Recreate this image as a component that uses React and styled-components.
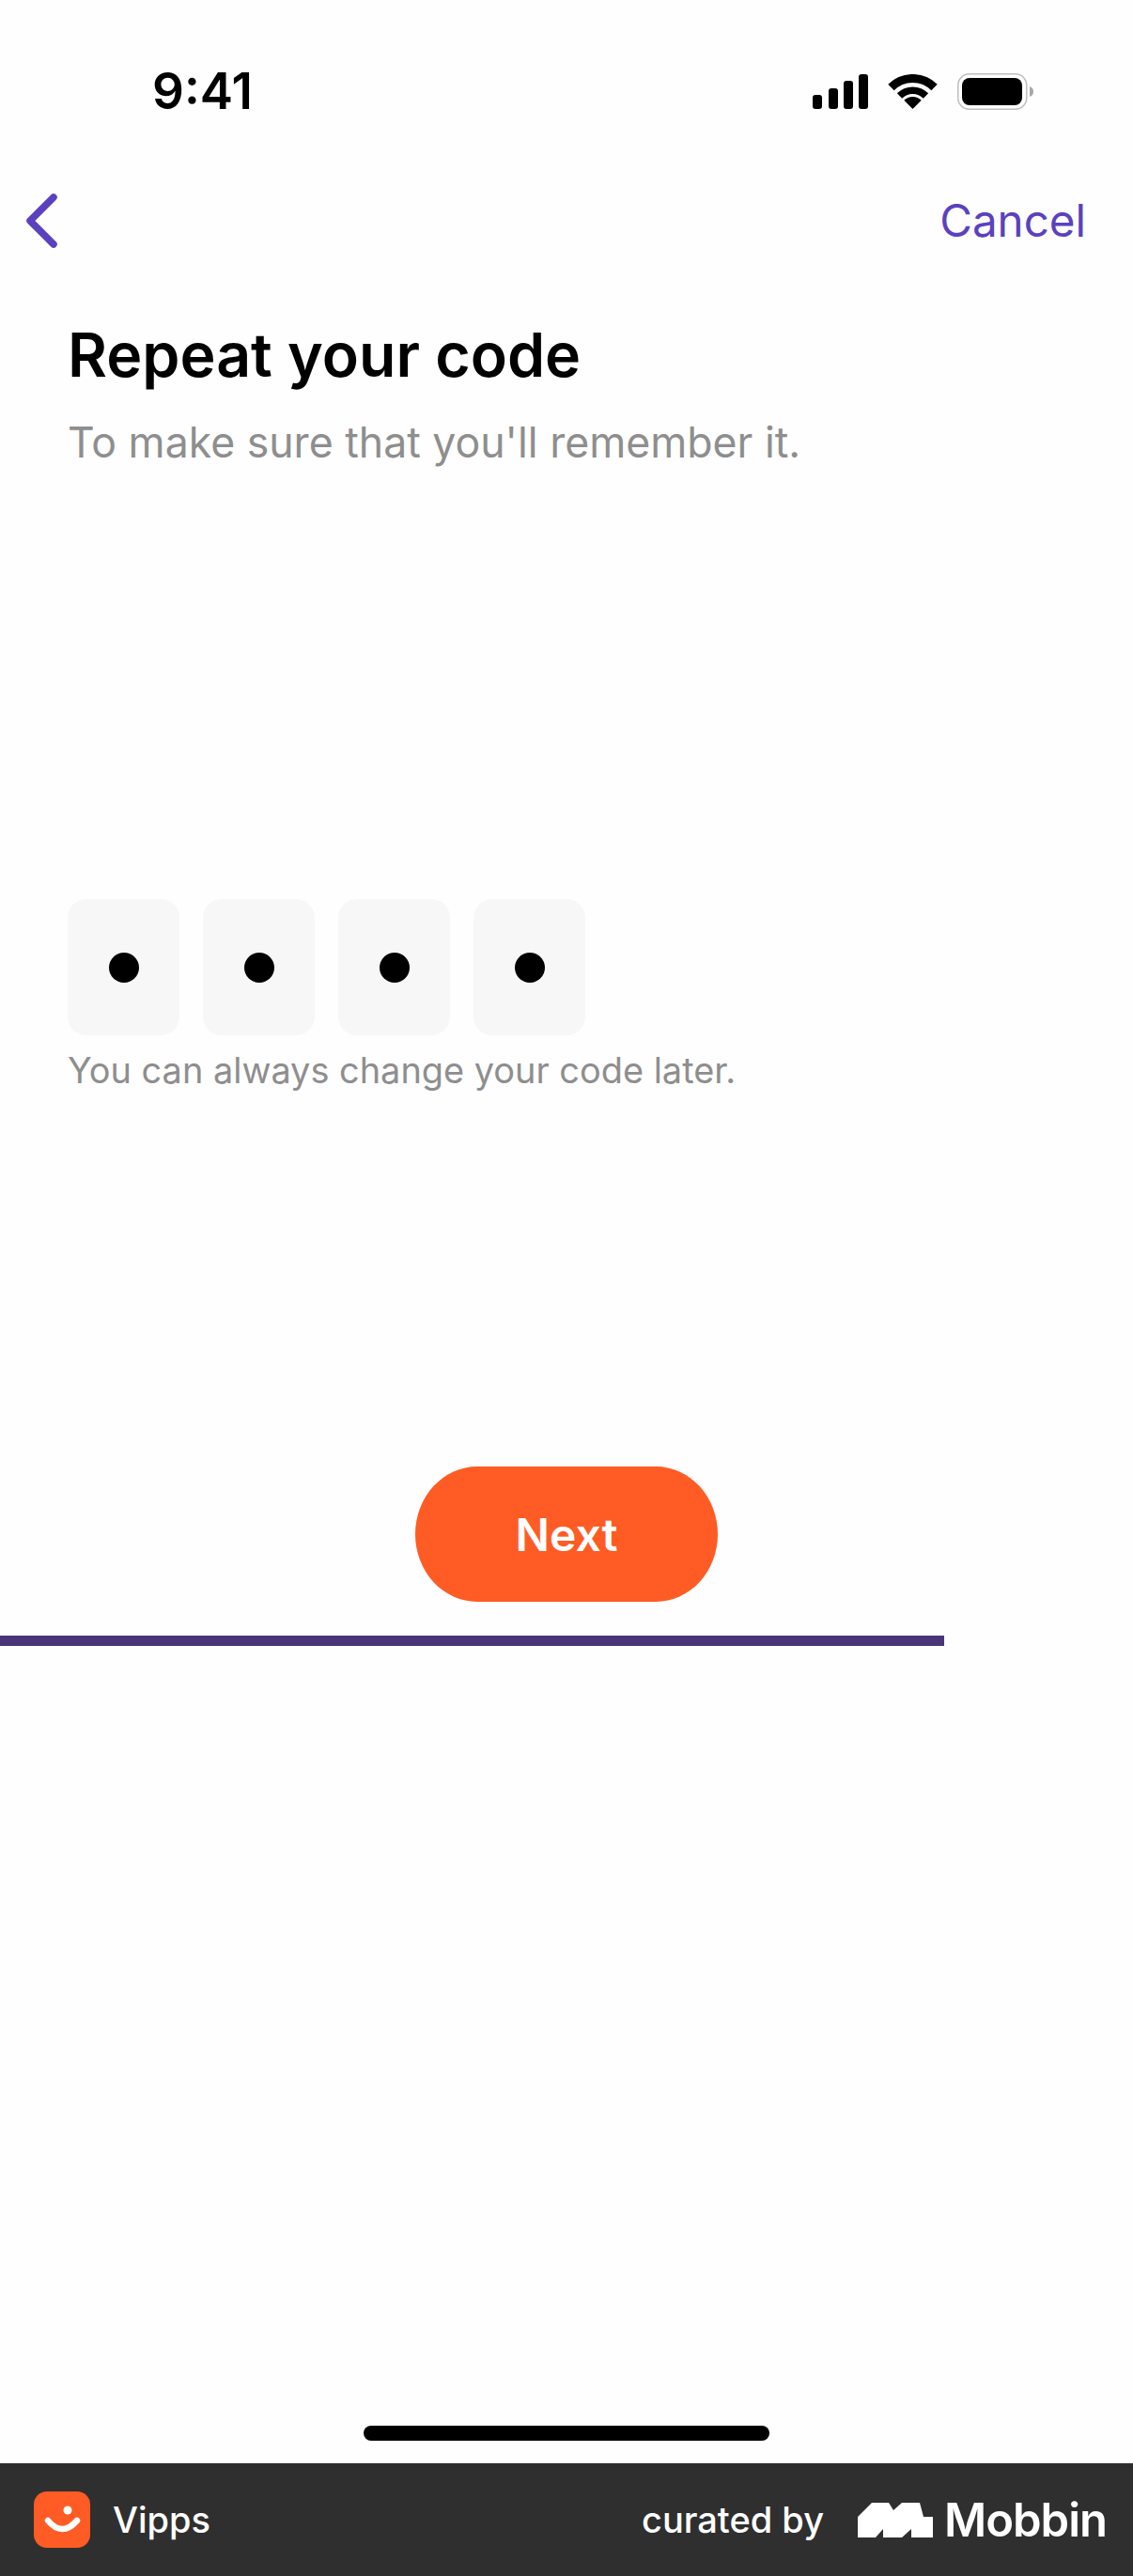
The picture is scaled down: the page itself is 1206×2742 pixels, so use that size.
import styled, { createGlobalStyle } from 'styled-components';

const GlobalStyle = createGlobalStyle`
  html, body {
    margin: 0;
    padding: 0;
    background: #fefefe;
  }
  * {
    box-sizing: border-box;
  }
`;

const Page = styled.div`
  display: flex;
  flex-direction: column;
  width: 1206px;
  height: 2742px;
  background: #fefefe;
  font-family: Inter, "Liberation Sans", sans-serif;
  overflow: hidden;
`;

const StatusBar = styled.header`
  display: flex;
  justify-content: space-between;
  align-items: center;
  height: 39px;
  margin-top: 78px;
  padding: 0 105px 0 162px;
`;

const Time = styled.span`
  font-size: 53px;
  font-weight: 600;
  line-height: 39px;
  color: #000;
`;

const StatusIcons = styled.div`
  display: flex;
  align-items: center;
  gap: 21px;
`;

const Nav = styled.nav`
  display: flex;
  justify-content: space-between;
  align-items: center;
  height: 58px;
  margin-top: 89px;
  padding: 0 50px 0 28px;
`;

const Cancel = styled.span`
  margin-bottom: 2px;
  font-size: 47.5px;
  color: #5b41bf;
`;

const Content = styled.main`
  flex: 1;
  display: flex;
  flex-direction: column;
  padding-left: 72px;
`;

const Title = styled.h1`
  margin: 76px 0 0;
  font-size: 64.4px;
  line-height: 76px;
  font-weight: 600;
  color: #000;
`;

const Subtitle = styled.p`
  margin: 30px 0 0;
  font-size: 44.6px;
  line-height: 50px;
  color: #8e8e8e;
`;

const Cells = styled.div`
  display: flex;
  gap: 25px;
  margin-top: 461px;
`;

const Cell = styled.div`
  display: flex;
  align-items: center;
  justify-content: center;
  width: 119px;
  height: 145px;
  border-radius: 20px;
  background: #f7f7f7;
`;

const Dot = styled.span`
  width: 32px;
  height: 32px;
  border-radius: 50%;
  background: #000;
`;

const Helper = styled.p`
  margin: 14px 0 0;
  font-size: 37.9px;
  line-height: 46px;
  color: #8e8e8e;
`;

const ButtonRow = styled.div`
  display: flex;
  justify-content: center;
  margin: 399px 0 0 -72px;
`;

const NextButton = styled.button`
  width: 322px;
  height: 144px;
  border: 0;
  border-radius: 66px / 72px;
  background: #ff5b24;
  color: #fff;
  font-family: inherit;
  font-size: 48px;
  font-weight: 600;
`;

const Progress = styled.div`
  width: 1005px;
  height: 11px;
  margin: 36px 0 0 -72px;
  background: #4a3578;
`;

const HomeIndicator = styled.div`
  width: 432px;
  height: 16px;
  margin: 0 auto 24px;
  border-radius: 8px;
  background: #000;
`;

const Footer = styled.footer`
  display: flex;
  justify-content: space-between;
  align-items: center;
  height: 120px;
  padding: 0 28px 0 36px;
  background: #2f2f2f;
  color: #fff;
`;

const FooterGroup = styled.div`
  display: flex;
  align-items: center;
  gap: ${(props) => props.$gap}px;
`;

const FooterText = styled.span`
  font-size: 38px;
  font-weight: 500;
`;

const BrandName = styled.span`
  font-size: 49px;
  font-weight: 600;
  letter-spacing: -1px;
`;

function SignalIcon() {
  return (
    <svg width="59" height="37" viewBox="0 0 59 37" fill="#000">
      <rect x="0" y="22" width="10" height="15" rx="3" />
      <rect x="17" y="15" width="10" height="22" rx="3" />
      <rect x="33" y="7" width="10" height="30" rx="3" />
      <rect x="49" y="0" width="10" height="37" rx="3" />
    </svg>
  );
}

function WifiIcon() {
  return (
    <svg width="53" height="37" viewBox="0 0 53 37" fill="none" stroke="#000">
      <path d="M3.5 14 A32.5 32.5 0 0 1 49.5 14" strokeWidth="9" />
      <path d="M12.5 23 A19.75 19.75 0 0 1 40.5 23" strokeWidth="7.5" />
      <path d="M26.5 37 L17.3 27.8 A13 13 0 0 1 35.7 27.8 Z" fill="#000" stroke="none" />
    </svg>
  );
}

function BatteryIcon() {
  return (
    <svg width="82" height="39" viewBox="0 0 82 39">
      <rect x="0.75" y="0.75" width="73" height="37.5" rx="12" fill="none" stroke="#bdbdbd" strokeWidth="1.5" />
      <rect x="5" y="5" width="64" height="29" rx="8" fill="#000" />
      <path d="M77 14 C80 15 81 17 81 19.5 C81 22 80 24 77 25 Z" fill="#a8a8a8" />
    </svg>
  );
}

function BackIcon() {
  return (
    <svg width="33" height="58" viewBox="0 0 33 58" fill="none">
      <path d="M29 4 L4 29 L29 54" stroke="#5b41bf" strokeWidth="7.5" strokeLinecap="round" strokeLinejoin="round" />
    </svg>
  );
}

function VippsLogo() {
  return (
    <svg width="60" height="60" viewBox="0 0 60 60">
      <rect width="60" height="60" rx="14" fill="#ff5b24" />
      <circle cx="36" cy="20" r="4.5" fill="#fff" />
      <path d="M15 31 Q30 49 46 31" fill="none" stroke="#fff" strokeWidth="6.5" strokeLinecap="round" />
    </svg>
  );
}

function MobbinLogo() {
  return (
    <svg width="80" height="37" viewBox="0 0 80 37" fill="#fff">
      <path d="M0 15 L15 0 H33 L38 8 L47 0 H66 L70 15 H80 V37 H57 V28 L47 37 H27 V28 L19 37 H0 Z" />
    </svg>
  );
}

export default function App() {
  const cells = [1, 2, 3, 4];

  return (
    <Page>
      <GlobalStyle />
      <StatusBar>
        <Time>9:41</Time>
        <StatusIcons>
          <SignalIcon />
          <WifiIcon />
          <BatteryIcon />
        </StatusIcons>
      </StatusBar>
      <Nav>
        <BackIcon />
        <Cancel>Cancel</Cancel>
      </Nav>
      <Content>
        <Title>Repeat your code</Title>
        <Subtitle>To make sure that you'll remember it.</Subtitle>
        <Cells>
          {cells.map((cell) => (
            <Cell key={cell}>
              <Dot />
            </Cell>
          ))}
        </Cells>
        <Helper>You can always change your code later.</Helper>
        <ButtonRow>
          <NextButton type="button">Next</NextButton>
        </ButtonRow>
        <Progress />
      </Content>
      <HomeIndicator />
      <Footer>
        <FooterGroup $gap={24}>
          <VippsLogo />
          <FooterText>Vipps</FooterText>
        </FooterGroup>
        <FooterGroup $gap={36}>
          <FooterText>curated by</FooterText>
          <FooterGroup $gap={12}>
            <MobbinLogo />
            <BrandName>Mobbin</BrandName>
          </FooterGroup>
        </FooterGroup>
      </Footer>
    </Page>
  );
}
